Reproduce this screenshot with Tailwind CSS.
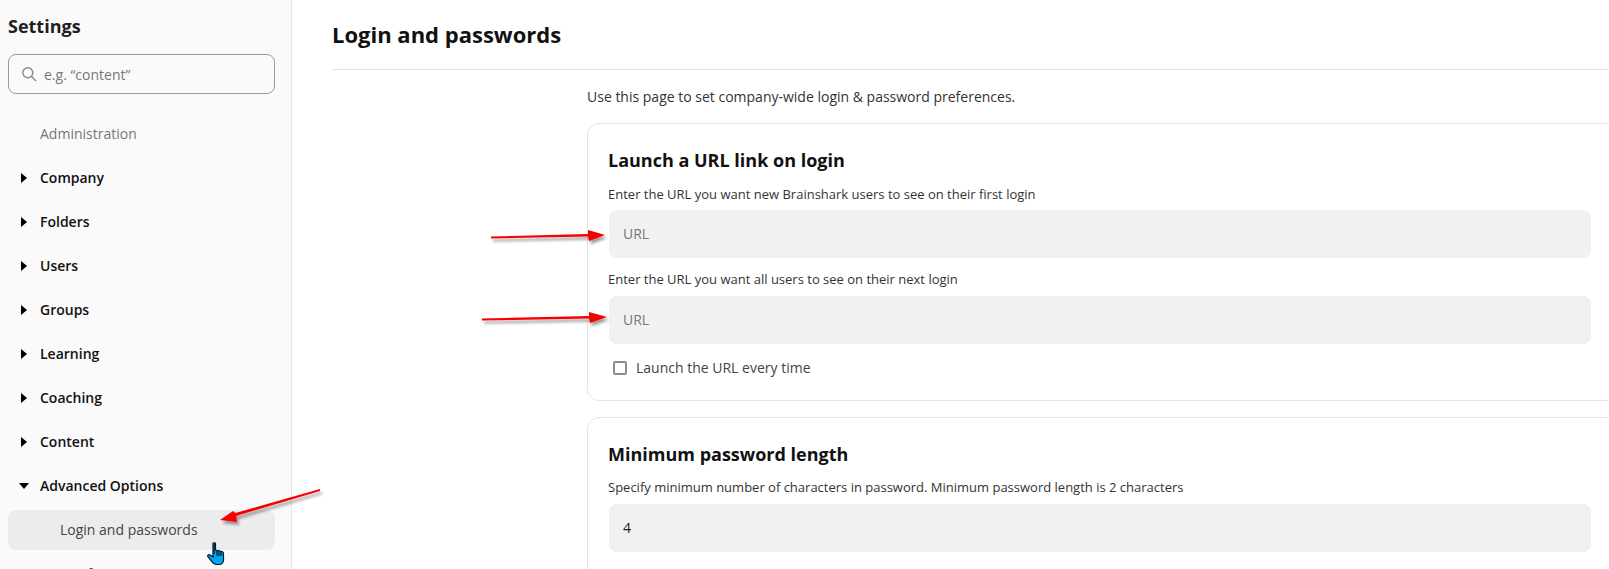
<!DOCTYPE html>
<html lang="en">
<head>
  <meta charset="UTF-8" />
  <title>Login and passwords</title>
  <script src="https://cdn.jsdelivr.net/npm/@tailwindcss/browser@4"></script>
</head>
<body class="relative h-[569px] overflow-hidden bg-white font-['Open_Sans',sans-serif] text-[#1a1a1a]">
  <div class="flex h-[569px]">
    <!-- sidebar -->
    <aside class="w-[292px] shrink-0 overflow-hidden border-r border-[#e4e4e4] bg-[#fafafa] px-2">
      <h2 class="mt-[14px] text-[18px] leading-6 font-bold text-[#1f1f1f]">Settings</h2>
      <div class="mt-[16px] flex h-10 w-[267px] items-center gap-[7px] rounded-lg border border-[#999] px-3">
        <svg class="h-4 w-4 text-[#8a8a8a]" viewBox="0 0 16 16" fill="none" stroke="currentColor" stroke-width="1.4"><circle cx="6.8" cy="6.8" r="5"/><path d="M10.5 10.5 15 15"/></svg>
        <span class="text-[14px] text-[#777]">e.g. “content”</span>
      </div>
      <p class="mt-[28px] h-[24px] pl-8 text-[14px] leading-6 text-[#767676]">Administration</p>
      <nav class="mt-[20px] flex flex-col gap-5 text-[14px] leading-6 font-semibold text-[#111]">
        <div class="flex items-center"><svg class="mr-[13px] ml-[13px] h-3 w-[6px]" viewBox="0 0 6 12"><path d="M0 1 6 6 0 11Z"/></svg>Company</div>
        <div class="flex items-center"><svg class="mr-[13px] ml-[13px] h-3 w-[6px]" viewBox="0 0 6 12"><path d="M0 1 6 6 0 11Z"/></svg>Folders</div>
        <div class="flex items-center"><svg class="mr-[13px] ml-[13px] h-3 w-[6px]" viewBox="0 0 6 12"><path d="M0 1 6 6 0 11Z"/></svg>Users</div>
        <div class="flex items-center"><svg class="mr-[13px] ml-[13px] h-3 w-[6px]" viewBox="0 0 6 12"><path d="M0 1 6 6 0 11Z"/></svg>Groups</div>
        <div class="flex items-center"><svg class="mr-[13px] ml-[13px] h-3 w-[6px]" viewBox="0 0 6 12"><path d="M0 1 6 6 0 11Z"/></svg>Learning</div>
        <div class="flex items-center"><svg class="mr-[13px] ml-[13px] h-3 w-[6px]" viewBox="0 0 6 12"><path d="M0 1 6 6 0 11Z"/></svg>Coaching</div>
        <div class="flex items-center"><svg class="mr-[13px] ml-[13px] h-3 w-[6px]" viewBox="0 0 6 12"><path d="M0 1 6 6 0 11Z"/></svg>Content</div>
        <div class="flex items-center"><svg class="mr-[11px] ml-[11px] h-[6px] w-[10px]" viewBox="0 0 10 6"><path d="M0 0H10L5 6Z"/></svg>Advanced Options</div>
      </nav>
      <div class="mt-[12px] flex h-10 w-[267px] items-center rounded-lg bg-[#ececec] pb-[2px] pl-[52px] text-[14px] text-[#444]">Login and passwords</div>
      <div class="mt-[12px] pl-[52px] text-[14px] leading-6 text-[#444]">Notifications</div>
    </aside>

    <!-- main content -->
    <main class="min-w-0 flex-1 overflow-hidden pl-10">
      <h1 class="h-[70px] border-b border-[#e2e2e2] pt-[18px] text-[22px] leading-8 font-bold text-[#111]">Login and passwords</h1>
      <div class="ml-[255px]">
        <p class="mt-[16px] text-[14px] leading-[22px] text-[#333]">Use this page to set company-wide login &amp; password preferences.</p>
        <section class="mt-[15px] h-[278px] w-[1030px] rounded-xl border border-[#e4e4e4] px-5 pt-[24px]">
          <h3 class="text-[18px] leading-6 font-bold text-[#111]">Launch a URL link on login</h3>
          <label class="mt-[12px] block text-[13px] leading-5 text-[#333]">Enter the URL you want new Brainshark users to see on their first login</label>
          <input class="mt-[6px] ml-px block h-12 w-[982px] rounded-lg bg-[#f1f1f1] px-[14px] pb-[2px] text-[14px] placeholder:text-[#777]" placeholder="URL" />
          <label class="mt-[11px] block text-[13px] leading-5 text-[#333]">Enter the URL you want all users to see on their next login</label>
          <input class="mt-[7px] ml-px block h-12 w-[982px] rounded-lg bg-[#f1f1f1] px-[14px] pb-[2px] text-[14px] placeholder:text-[#777]" placeholder="URL" />
          <div class="mt-[12px] flex items-center pl-[5px] text-[14px] leading-6 text-[#444]">
            <span class="mr-[9px] h-[14px] w-[14px] rounded-[2px] border-2 border-[#8c8c8c] bg-white"></span>Launch the URL every time
          </div>
        </section>
        <section class="mt-[16px] h-[200px] w-[1030px] rounded-xl border border-[#e4e4e4] px-5 pt-[24px]">
          <h3 class="text-[18px] leading-6 font-bold text-[#111]">Minimum password length</h3>
          <label class="mt-[11px] block text-[13px] leading-5 text-[#333]">Specify minimum number of characters in password. Minimum password length is 2 characters</label>
          <input class="mt-[7px] ml-px block h-12 w-[982px] rounded-lg bg-[#f1f1f1] px-[14px] pb-[2px] text-[14px] text-[#222]" value="4" />
        </section>
      </div>
    </main>
  </div>

  <!-- annotation arrows drawn over the page -->
  <svg class="pointer-events-none absolute top-0 left-0" width="1609" height="569" viewBox="0 0 1609 569">
    <defs><filter id="sh" x="-10%" y="-50%" width="120%" height="250%"><feDropShadow dx="2" dy="3" stdDeviation="1.5" flood-color="#000" flood-opacity="0.4"/></filter></defs>
    <g fill="#f80000" filter="url(#sh)">
      <path d="M491 236.5 588 234 588 230 605 235 589 241 588 236.5 491 238.5Z"/>
      <path d="M482 318.5 589 316 589 312 607 317 590 323 589 318.5 482 320.5Z"/>
      <path d="M320 489 235.500 513 233 511 220 520 237 522 236 516 320 491Z"/>
    </g>
    <!-- hand cursor -->
    <path transform="translate(207 542)" d="M6 1.500C6 .5 8.500 .5 8.500 1.500V8L15 9.500C16.500 10 16.500 11 16.500 12V18C16.500 20 15 22.500 12 22.500H9C7 22.500 6 21 4.500 19L.8 14.500C.2 13.500 1.500 12 3 13L6 15Z" fill="#00a8f4" stroke="#06121e" stroke-width="1.200"/>
    <path transform="translate(207 542)" d="M7.200 2V12M10 9V14M12 9V14M14 9.500V14" stroke="#06121e" stroke-width="1.100"/>
  </svg>
</body>
</html>
